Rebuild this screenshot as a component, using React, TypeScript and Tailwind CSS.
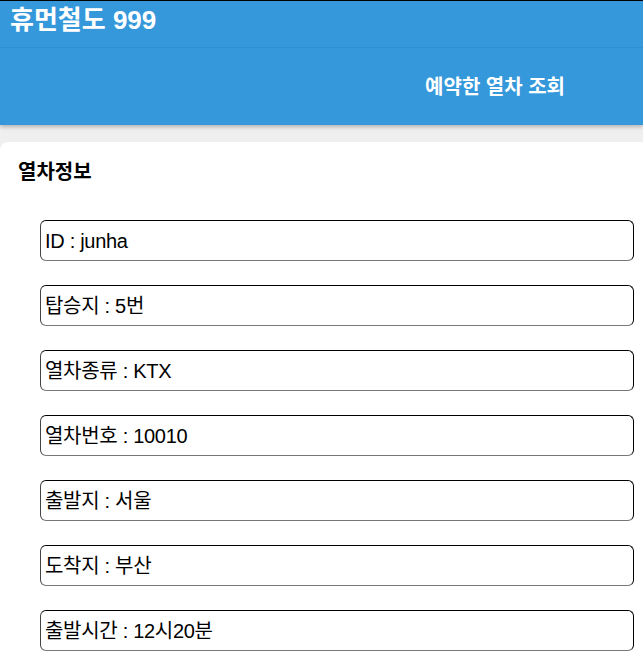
const items = [
  "ID : junha",
  "탑승지 : 5번",
  "열차종류 : KTX",
  "열차번호 : 10010",
  "출발지 : 서울",
  "도착지 : 부산",
  "출발시간 : 12시20분",
];

export default function App() {
  return (
    <div
      className="min-h-[656px] bg-[#efefef]"
      style={{ fontFamily: '"Liberation Sans", "Noto Sans CJK KR", sans-serif' }}
    >
      <header className="bg-[#3498db] border-t border-black shadow-[0_2px_4px_rgba(0,0,0,0.25)]">
        <div className="h-[47px] border-b border-[#3190d2] px-[10px] pt-[3px]">
          <h1 className="text-[26px] font-bold text-white leading-[32px]">휴먼철도 999</h1>
        </div>
        <nav className="h-[77px] flex items-center justify-end pr-[78px]">
          <span className="text-[20px] font-bold text-white">예약한 열차 조회</span>
        </nav>
      </header>
      <main className="mt-[17px] bg-white rounded-tl-lg pt-[18px] pb-[10px]">
        <h2 className="px-[18px] text-[20px] font-bold text-black leading-[24px]">열차정보</h2>
        <div className="mt-[36px] flex flex-col gap-[24px] pl-[40px] pr-[9px]">
          {items.map((t) => (
            <div
              key={t}
              className="h-[41px] flex items-center px-[4px] rounded-[6px] border border-t-black border-r-black border-l-[#444] border-b-[#777] text-[20px] text-black tracking-[-0.3px]"
            >
              {t}
            </div>
          ))}
        </div>
      </main>
    </div>
  );
}
